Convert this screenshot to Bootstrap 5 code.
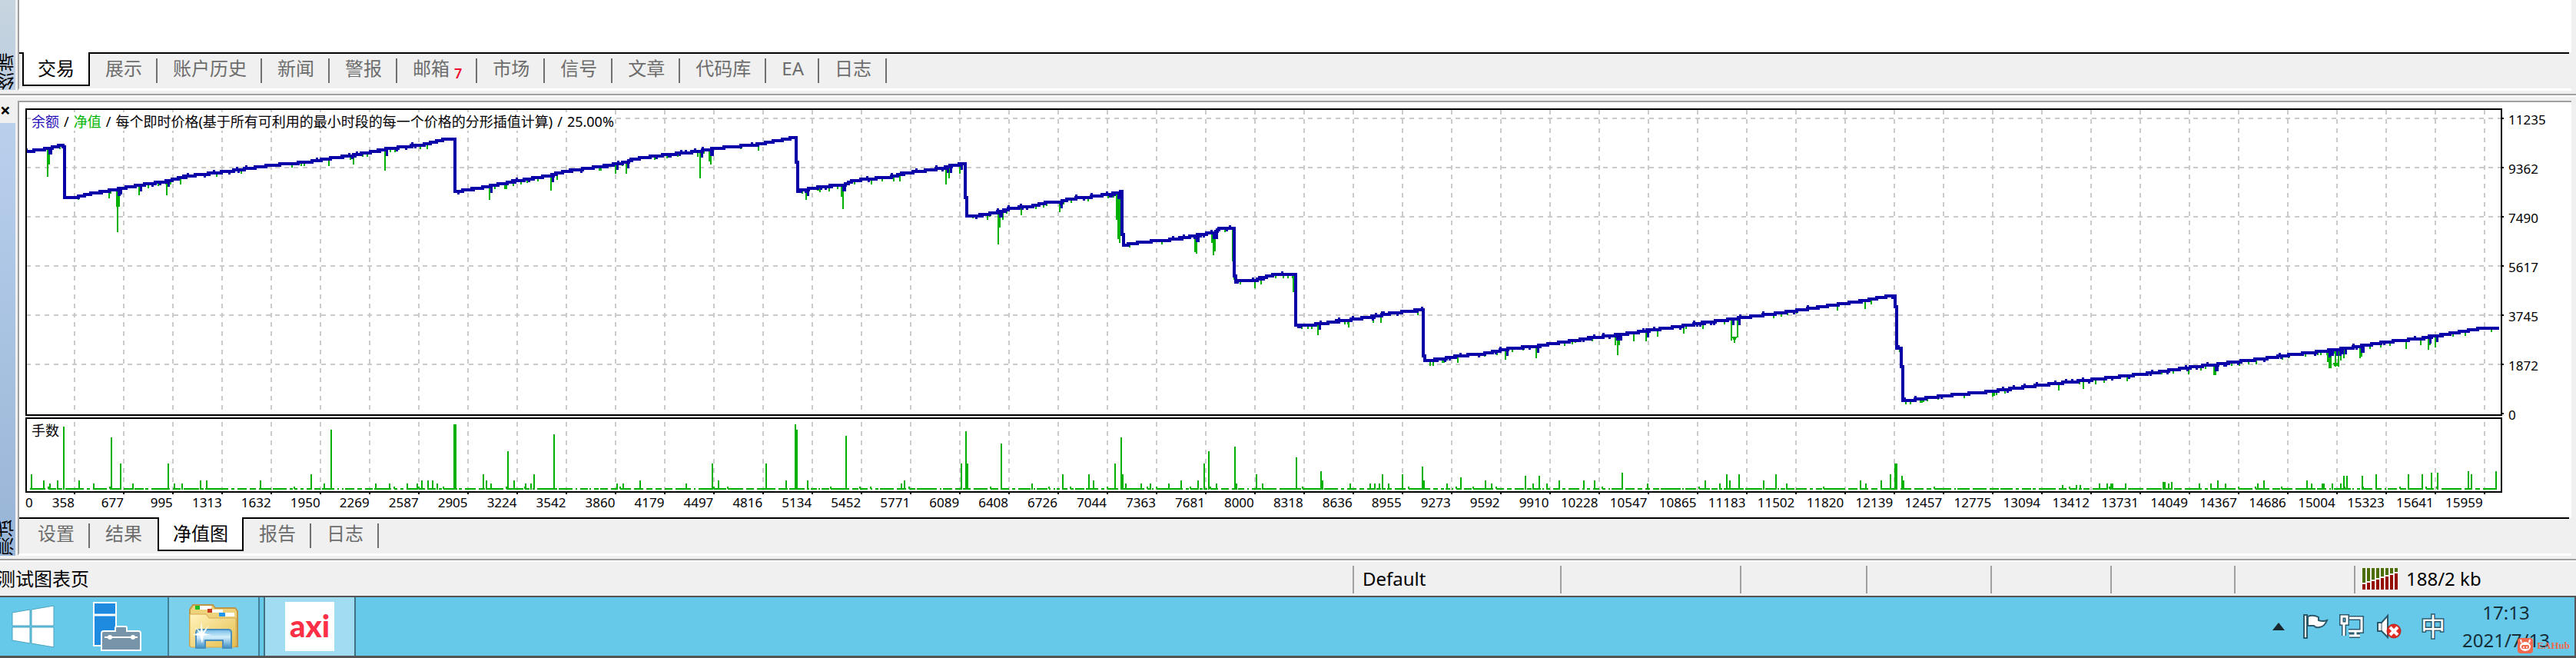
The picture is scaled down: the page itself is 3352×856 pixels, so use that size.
<!DOCTYPE html>
<html lang="zh-CN">
<head>
<meta charset="utf-8">
<meta name="viewport" content="width=device-width, initial-scale=1">
<title>测试图表页</title>
<link href="https://cdn.jsdelivr.net/npm/bootstrap@5.3.0/dist/css/bootstrap.min.css" rel="stylesheet">
<style>
body { font-family: "Noto Sans", "Noto Sans CJK SC", sans-serif; font-size: 24px; line-height: 26px; background: #f0f0f0; color: #000; }
button { font: inherit; }
.side { width: 20px; flex: none; overflow: hidden; }
.side-top { background: linear-gradient(#c6d5df, #bdcde0); height: 117px; }
.side-low { background: linear-gradient(#b9d0ed, #98b4d6); height: 563px; }
.side-text { writing-mode: vertical-rl; transform: rotate(180deg); width: 24px; line-height: 24px; margin-left: -4px; }
.close-btn { border: 0; background: none; padding: 0; width: 18px; line-height: 34px; font-weight: 700; font-size: 24px; text-align: left; display: block; }
.pane { border-left: 2px solid #a0a0a0; background: #fff; margin: 0 6px 0 3px; min-width: 0; }
.pane-top { border-bottom: 3px solid #fff; }
.pane-low { border-top: 2px solid #a0a0a0; border-bottom: 3px solid #fff; margin-top: 5px; }
.pane-body { height: 68px; }
.rule { height: 4px; background: #a0a0a0; border-bottom: 2px solid #fff; }
.tabs { background: #f0f0f0; height: 47px; padding-right: 3px; margin: 0; list-style: none; padding-left: 0; }
.tabs > li { border-top: 2px solid #000; flex: none; }
.tabs .stub { width: 4px; }
.tabs button { display: block; border: 0; border-right: 2px solid #6f6f6f; background: none; height: 32px; line-height: 26px; margin-top: 6px; padding: 0 18px 6px 20px; color: #6d6d6d; white-space: nowrap; }
.tabs .on { background: #fff; border: 2px solid #000; border-top: 0; height: 44px; }
.tabs .on button { color: #000; border: 0; margin-top: 8px; padding: 0 18px 6px; }
.tabs .next-on button { border-color: transparent; }
.tabs .rest { flex: 1 1 0; }
.unread { font-size: 18px; color: #f01030; line-height: 20px; margin: 9px 0 0 6px; font-weight: 600; float: right; }
.chart-area { padding: 8px 0 10px 8px; }
.plot svg { display: block; width: 100%; height: 504px; }
.axis { font-size: 17px; line-height: 24px; }
.y-axis { width: 87px; padding: 3px 0 0 5px; }
.y-axis div { height: 64px; }
.x-axis { line-height: 18px; padding: 0 28px 0 0; white-space: nowrap; }
.x-axis > div { flex: 1 1 0; min-width: 0; display: flex; justify-content: flex-end; }
.legend-line { top: 5px; left: 8px; background: #fff; font-size: 18px; line-height: 24px; white-space: nowrap; gap: 6px; }
.lots-name { top: 407px; left: 8px; font-size: 18px; line-height: 24px; background: #fff; }
.gap-strip { height: 4px; }
.status { height: 44px; padding-top: 5px; }
.status > div { box-shadow: inset 2px 0 #a0a0a0; height: 36px; line-height: 34px; white-space: nowrap; min-width: 0; }
.status > .hint { box-shadow: none; }
.status span { margin-left: 13px; }
.status .hint span { margin-left: -4px; }
.status svg { margin: 3px 9px 0 11px; }
.status .net-text { margin: 0; }
.taskbar { background: #66c9ea; border-top: 2px solid #555; border-bottom: 3px solid #555; border-right: 2px solid #555; height: 81px; }
.task { border: 0; padding: 0; background: none; height: 76px; display: flex; align-items: center; justify-content: center; }
.task-start { width: 86px; }
.task-server { width: 132px; }
.task-open { width: 120px; border: solid #3f7f98; border-width: 0 2px; background: #7bd1ec; }
.task-axi { background: #a0dcf2; margin-left: 5px; border-color: #3f7180; }
.axi-tile { width: 64px; height: 64px; background: #fff; color: #fb2f45; font: 900 40px/62px Lato, sans-serif; }
.tray { padding-right: 28px; }
.tray button { border: 0; padding: 0; background: none; display: block; }
.tray svg { display: block; }
.tray .more { margin-right: 22px; }
.tray .flag { margin-right: 14px; }
.ime { color: #fff; font-size: 32px; line-height: 36px; width: 32px; -webkit-text-stroke: 3px #2b586a; paint-order: stroke fill; }
.clock { color: #152e38; line-height: 36px; text-align: center; width: 122px; margin-left: 18px; }
.hub { right: 6px; bottom: 3px; color: #f0694f; font: 700 13px/20px "Liberation Serif", serif; gap: 5px; }
</style>
</head>
<body>
<main>
  <div class="d-flex">
    <div class="side side-top d-flex align-items-end"><span class="side-text">终端</span></div>
    <section class="pane pane-top flex-grow-1">
      <div class="pane-body"></div>
      <ul class="tabs d-flex">
        <li class="stub"></li>
        <li class="on"><button type="button">交易</button></li>
        <li><button type="button">展示</button></li>
        <li><button type="button">账户历史</button></li>
        <li><button type="button">新闻</button></li>
        <li><button type="button">警报</button></li>
        <li><button type="button">邮箱<span class="unread">7</span></button></li>
        <li><button type="button">市场</button></li>
        <li><button type="button">信号</button></li>
        <li><button type="button">文章</button></li>
        <li><button type="button">代码库</button></li>
        <li><button type="button">EA</button></li>
        <li><button type="button">日志</button></li>
        <li class="rest"></li>
      </ul>
    </section>
  </div>
  <div class="gap-strip"></div>
  <div class="rule"></div>
  <div class="d-flex">
    <div class="side">
      <button class="close-btn" type="button" aria-label="关闭">×</button>
      <div class="side-low d-flex align-items-end"><span class="side-text">测试</span></div>
    </div>
    <section class="pane pane-low flex-grow-1">
      <div class="chart-area d-flex">
        <div class="plot position-relative flex-grow-1">
          <svg id="plot" viewBox="33 142 3226 504" preserveAspectRatio="none" shape-rendering="crispEdges" fill="none" role="img" aria-label="净值图"></svg>
          <div class="legend-line position-absolute d-flex"><span style="color:#2a10b8">余额</span><span>/</span><span style="color:#00b400">净值</span><span>/</span><span>每个即时价格(基于所有可利用的最小时段的每一个价格的分形插值计算)</span><span>/</span><span>25.00%</span></div>
          <div class="lots-name position-absolute">手数</div>
          <div class="axis x-axis d-flex" id="xAxis"></div>
        </div>
        <div class="axis y-axis flex-shrink-0">
          <div>11235</div><div>9362</div><div>7490</div><div>5617</div><div>3745</div><div>1872</div><div>0</div>
        </div>
      </div>
      <ul class="tabs d-flex">
        <li class="stub"></li>
        <li><button type="button">设置</button></li>
        <li class="next-on"><button type="button">结果</button></li>
        <li class="on"><button type="button">净值图</button></li>
        <li><button type="button">报告</button></li>
        <li><button type="button">日志</button></li>
        <li class="rest"></li>
      </ul>
    </section>
  </div>
  <div class="gap-strip"></div>
  <div class="rule"></div>
  <footer class="status d-flex">
    <div class="hint" style="flex:1760 1 0"><span>测试图表页</span></div>
    <div style="flex:270 1 0"><span>Default</span></div>
    <div style="flex:234 1 0"></div>
    <div style="flex:164 1 0"></div>
    <div style="flex:162 1 0"></div>
    <div style="flex:156 1 0"></div>
    <div style="flex:161 1 0"></div>
    <div style="flex:156 1 0"></div>
    <div class="d-flex" style="flex:289 1 0">
      <svg id="signal" width="48" height="28" class="flex-shrink-0" viewBox="0 0 48 28" shape-rendering="crispEdges" aria-hidden="true"></svg><span class="net-text">188/2 kb</span>
    </div>
  </footer>
</main>
<nav class="taskbar d-flex align-items-center position-relative">
  <button class="task task-start" type="button" aria-label="开始">
    <svg width="56" height="56" viewBox="0 0 56 56" fill="#fff" stroke="#4aa3c0" stroke-width="1"><path d="M1 10 24 6V27H1zM26 6 55 1V27H26zM1 29H24V50L1 46zM26 29H55V55L26 50z"/></svg>
  </button>
  <button class="task task-server" type="button" aria-label="服务器管理器">
    <svg width="66" height="66" viewBox="0 0 66 66"><path fill="#1e8be0" stroke="#fff" stroke-width="2" d="M3 2H32V58H3z"/><path stroke="#fff" stroke-width="3" d="M3 18H32"/><path fill="#7794a9" stroke="#fff" stroke-width="2" d="M31 39V35q0-2 2-2H44q2 0 2 2v4H61q3 0 3 3V64H13V42q0-3 3-3z"/><path stroke="#fff" stroke-width="2" d="M17 47H60"/><circle cx="24" cy="47" r="3" fill="#fff"/><circle cx="54" cy="47" r="3" fill="#fff"/></svg>
  </button>
  <button class="task task-open" type="button" aria-label="文件资源管理器">
    <svg width="66" height="62" viewBox="0 0 66 62">
      <defs><linearGradient id="fold" x2="1" y2="1"><stop stop-color="#fff4bd"/><stop offset="1" stop-color="#e6bd4d"/></linearGradient><linearGradient id="stand" x2="0" y2="1"><stop stop-color="#6fb9e6"/><stop offset=".4" stop-color="#d3effc"/><stop offset="1" stop-color="#3d8ec5"/></linearGradient></defs>
      <path d="M2 56V9L6 3H32L35 7H61L64 11V57H4z" fill="#eed27c" stroke="#bf9645" stroke-width="2"/>
      <path d="M14 4H30V9H14zM28 9H45V13H28zM46 13H60V18H46z" fill="#fff"/>
      <path fill="#19bd22" d="M9 4H15V9H9z"/><path fill="#c73a20" d="M25 8H31V13H25z"/>
      <path d="M2 56V15H23L27 20H62V56L60 58H4z" fill="url(#fold)" stroke="#d3aa51" stroke-width="1"/>
      <path d="M40 13H60V18H40z" fill="#fff"/><path fill="#2196ee" d="M40 13H48V18H40z"/>
      <path d="M10 59V39q0-4 4-4H52q4 0 4 4V59H45V49H22V59z" fill="url(#stand)" stroke="#4a8fbd" stroke-width="2"/>
      <path d="M17 25 19 38 27 29 21 40 30 42 20 43 18 53 15 43 5 42 14 39 9 31 16 38z" fill="#fff"/>
    </svg>
  </button>
  <button class="task task-open task-axi" type="button"><span class="axi-tile">axi</span></button>
  <div class="tray d-flex align-items-center ms-auto">
    <button type="button" class="more" aria-label="显示隐藏的图标"><svg width="18" height="12" viewBox="0 0 18 12"><path fill="#18272d" d="M1 11 9 1 17 11z"/></svg></button>
    <button type="button" class="flag" aria-label="操作中心"><svg width="34" height="34" viewBox="0 0 34 34" fill="#fff" stroke="#2b586a" stroke-width="2"><path d="M7 4q7-3 14 1v4q6 2 11 0-3 8-10 9-5 1-7-2H7z"/><path d="M2 2H6V32H2z"/></svg></button>
    <button type="button" class="me-3" aria-label="网络"><svg width="32" height="32" viewBox="0 0 32 32" fill="none"><path d="M13 5H29V22H12M21 22V27M13 28H27M6 13V28" stroke="#2b586a" stroke-width="6"/><path d="M3 3H10V12H3z" stroke="#2b586a" stroke-width="6"/><path d="M13 5H29V22H12M21 22V27M13 28H27M6 13V28M3 3H10V12H3z" stroke="#fff" stroke-width="3"/></svg></button>
    <button type="button" class="me-4" aria-label="音量"><svg width="34" height="34" viewBox="0 0 34 34"><path d="M2 12H7L15 3V31L7 23H2z" fill="#fff" stroke="#2b586a" stroke-width="2"/><path d="M7 12V23" stroke="#2b586a"/><circle cx="23" cy="23" r="9" fill="#df2b22" stroke="#b7241c"/><path d="M18 18 28 28M28 18 18 28" stroke="#fff" stroke-width="4"/></svg></button>
    <button type="button" class="ime">中</button>
    <div class="clock">17:13<br>2021/7/13</div>
  </div>
  <div class="hub position-absolute d-flex align-items-center">
    <svg width="20" height="20" viewBox="0 0 20 20"><rect width="20" height="20" rx="4" fill="#f0694f"/><ellipse cx="10" cy="11" rx="7" ry="6" fill="#fff"/><path d="M5 6 4 2M15 6 16 2" stroke="#fff" stroke-width="2"/><rect x="5" y="9" width="10" height="5" rx="2" fill="#f0694f"/><circle cx="8" cy="12" r="1" fill="#fff"/><circle cx="12" cy="12" r="1" fill="#fff"/></svg>EAHub
  </div>
</nav>
<script src="https://cdn.jsdelivr.net/npm/bootstrap@5.3.0/dist/js/bootstrap.bundle.min.js"></script>
<script>
// Balance curve as x, y pairs
const balance = [34,198,52,196,63,194,79,190,82,192,83,257,101,257,122,252,153,247,180,242,214,237,245,230,287,225,325,220,352,216,398,212,429,207,459,203,501,195,551,189,574,183,591,182,592,249,600,249,627,245,674,236,716,229,734,224,779,218,814,212,823,208,868,202,908,198,930,194,984,189,1033,180,1035,180,1036,212,1037,250,1046,248,1069,244,1098,241,1109,236,1158,231,1180,226,1225,220,1238,216,1255,214,1256,257,1258,282,1271,282,1302,276,1315,272,1343,269,1363,264,1379,264,1389,260,1419,257,1455,252,1459,250,1460,306,1461,320,1486,316,1532,312,1557,307,1580,303,1585,299,1605,298,1606,360,1608,367,1634,365,1654,359,1685,357,1686,423,1690,425,1720,422,1756,417,1787,413,1812,408,1843,405,1850,403,1851,457,1853,471,1862,470,1899,464,1930,461,1960,455,2000,451,2040,445,2084,439,2117,435,2144,431,2183,426,2216,421,2254,416,2309,409,2364,401,2419,393,2464,385,2466,399,2468,453,2473,454,2475,503,2476,522,2490,521,2528,516,2583,511,2638,504,2693,498,2748,492,2803,486,2828,482,2856,478,2884,475,2906,472,2941,468,2976,463,3022,458,3060,453,3103,446,3152,441,3187,435,3229,428,3248,427,3251,430];
// Equity dips: x and lowest y
const dips = [62,231,64,215,142,259,152,270,153,303,155,270,181,255,193,246,217,255,235,241,428,217,460,215,478,205,501,223,547,195,556,195,637,261,657,247,659,247,717,249,725,235,801,227,815,227,908,205,911,233,923,211,925,215,987,197,1049,261,1067,251,1079,250,1095,257,1097,273,1134,241,1163,237,1171,237,1231,241,1235,233,1249,227,1266,285,1270,285,1285,287,1299,319,1301,297,1305,287,1329,281,1379,277,1381,271,1449,258,1453,287,1455,312,1457,317,1555,329,1557,331,1577,317,1579,333,1581,328,1604,341,1633,376,1641,371,1683,381,1707,429,1715,437,1755,427,1787,421,1797,421,1845,411,1861,477,1865,477,1877,473,1879,473,1897,473,1959,469,1999,467,2050,447,2102,450,2105,463,2107,450,2126,445,2142,445,2157,439,2191,435,2216,429,2253,444,2261,440,2318,413,2391,405,2427,403,2435,397,2499,525,2501,525,2503,524,2593,517,2595,516,2609,513,2679,509,2711,507,2727,501,2768,497,2813,488,2848,488,2881,489,2883,489,2936,475,3029,472,3031,480,3033,480,3039,478,3043,478,3046,470,3050,467,3071,467,3073,465,3098,453,3131,455,3150,450,3160,456,3162,450,3169,453,3208,438];
// Lot size bars: x and top y
const lots = [41,618,57,626,65,630,75,626,83,556,103,626,122,630,145,570,157,604,173,630,219,604,227,630,237,630,261,626,269,626,339,626,405,618,422,630,431,560,489,630,507,630,530,630,543,630,549,626,557,626,563,626,569,630,591,553,593,553,629,618,633,626,639,630,661,588,669,626,684,630,691,630,695,618,721,566,803,630,811,630,833,626,893,630,927,604,935,626,997,604,1023,626,1035,553,1037,560,1051,626,1101,568,1173,630,1177,626,1251,604,1257,562,1259,604,1303,578,1343,630,1383,618,1417,618,1423,626,1451,604,1459,570,1461,618,1465,630,1485,630,1497,630,1521,630,1537,626,1559,626,1567,604,1573,588,1583,630,1607,582,1609,630,1635,618,1643,630,1687,596,1719,614,1721,626,1757,630,1783,630,1789,630,1795,630,1799,618,1807,630,1825,618,1851,608,1853,626,1883,630,1901,622,1933,626,1941,630,1985,620,1995,630,2003,620,2013,630,2029,626,2061,626,2075,626,2111,616,2144,630,2219,626,2238,630,2247,618,2251,626,2263,618,2295,626,2311,618,2325,630,2421,626,2428,630,2448,626,2460,618,2466,604,2468,604,2475,620,2477,626,2684,632,2702,632,2707,632,2732,630,2742,630,2747,630,2749,630,2766,630,2815,628,2817,628,2822,630,2826,628,2862,630,2877,630,2886,626,2896,630,2938,630,2946,626,3002,626,3008,630,3022,630,3024,630,3035,630,3046,630,3050,620,3054,620,3074,620,3092,618,3134,618,3152,618,3164,616,3172,616,3212,614,3216,618,3248,614];

let seed = 7;
const rnd = () => (seed = (seed * 16807) % 2147483647) / 2147483647;
const snap = v => Math.round(v / 2) * 2;
function levelAt(x) {
  for (let i = 2; i < balance.length; i += 2)
    if (x <= balance[i]) {
      const t = (x - balance[i - 2]) / (balance[i] - balance[i - 2]);
      return balance[i - 1] + t * (balance[i + 1] - balance[i - 1]);
    }
  return balance[balance.length - 1];
}
let grid = '', ticks = '', line = '', noise = '', equity = '', bars = '';
for (let x = 97; x <= 3233; x += 64) {
  grid += `M${x} 144V540M${x} 550V639`;
  ticks += `M${x} 641v3`;
}
let gridH = '';
for (let y = 155; y < 530; y += 64) gridH += `M34 ${y}H3254`;
for (let y = 155; y < 560; y += 64) ticks += `M3254 ${y}h4`;
for (let x = 34; x <= 3250; x += 2) {
  const y = snap(levelAt(x));
  line += (line ? `H${x}V${y}` : `M${x} ${y}`);
  const r = rnd();
  if (r < .05) noise += `M${x} ${y}v-4`;
  else if (r < .12) noise += `M${x} ${y}v4`;
  else if (r < .19) equity += `M${x} ${y}v5`;
}
for (let i = 0; i < dips.length; i += 2) {
  const y = snap(levelAt(dips[i] - 1)), depth = dips[i + 1] - y;
  equity += `M${dips[i]} ${y}V${dips[i + 1]}`;
  if (depth > 12 && depth < 70) noise += `M${dips[i] + 2} ${y}v8`;
}
equity += 'M2254 440H2260M2255 442H2259M2257 440V447M3036 474H3043M3037 476H3043';
for (let i = 0; i < lots.length; i += 2) bars += `M${lots[i]} ${lots[i + 1]}V638`;
for (let x = 39; x < 3248;) {
  const w = 2 + snap(rnd() * rnd() * 34);
  bars += `M${x} 637h${w}`;
  if (rnd() < .2) bars += `M${x} 637v-3`;
  x += w + 2 + snap(rnd() * 3);
}
const path = (d, c, w, extra = '') => `<path d="${d}" stroke="${c}" stroke-width="${w}" ${extra}/>`;
document.getElementById('plot').innerHTML =
  path(grid, '#cacaca', 2, 'stroke-dasharray="6 6"') + path(gridH, '#cacaca', 2, 'stroke-dasharray="6 6"') +
  path(equity, '#00b000', 2) + path(noise, '#0a00a8', 3) + path(line, '#0a00a8', 4) + path(bars, '#00b000', 2) +
  path('M34 143H3255V541H34zM34 545H3255V641H34z' + ticks, '#000', 2);

const labels = [358,677,995,1313,1632,1950,2269,2587,2905,3224,3542,3860,4179,4497,4816,5134,5452,5771,6089,6408,6726,7044,7363,7681,8000,8318,8636,8955,9273,9592,9910,10228,10547,10865,11183,11502,11820,12139,12457,12775,13094,13412,13731,14049,14367,14686,15004,15323,15641,15959];
document.getElementById('xAxis').innerHTML = labels.map((n, i) => `<div>${i ? '' : '<span class="me-auto">0</span>'}<span>${n}</span></div>`).join('');

let sig = '';
for (let i = 0; i < 8; i++) {
  const top = 19 - i * 2;
  sig += `<path fill="#4c6d00" d="M${i * 6} 0h4v${top}h-4z"/><path fill="#960f05" d="M${i * 6} ${top + 2}h4V28h-4z"/>`;
}
document.getElementById('signal').innerHTML = sig;
</script>
</body>
</html>
